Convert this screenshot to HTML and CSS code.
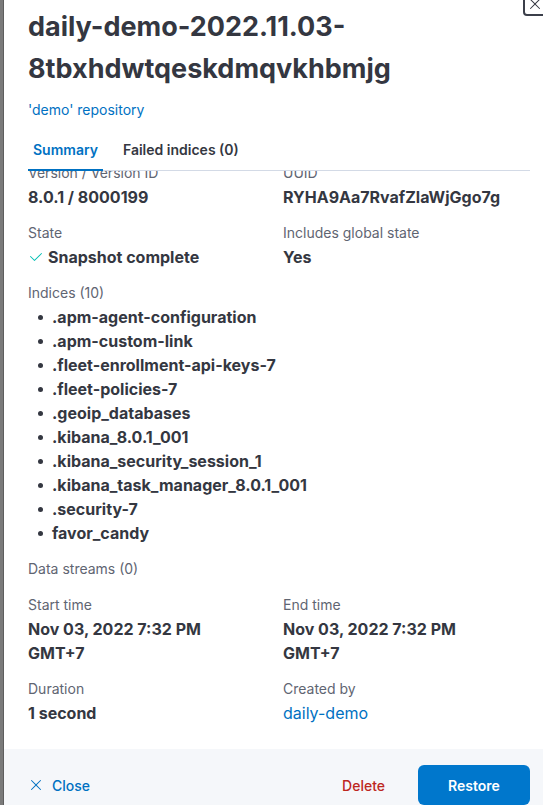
FILE: index.html
```html
<!DOCTYPE html>
<html lang="en">
<head>
<meta charset="utf-8">
<title>Snapshot details</title>
<link rel="stylesheet" href="styles.css">
</head>
<body>
<div class="flyout">
  <button class="flyout-close" aria-label="Close this dialog">
    <svg viewBox="0 0 16 16" width="16" height="16"><path d="M7.293 8 3.146 3.854a.5.5 0 1 1 .708-.708L8 7.293l4.146-4.147a.5.5 0 0 1 .708.708L8.707 8l4.147 4.146a.5.5 0 0 1-.708.708L8 8.707l-4.146 4.147a.5.5 0 0 1-.708-.708L7.293 8Z" fill="currentColor"/></svg>
  </button>
  <header class="flyout-header">
    <h2 class="title">daily-demo-2022.11.03-8tbxhdwtqeskdmqvkhbmjg</h2>
    <a class="repo-link" href="#">'demo' repository</a>
    <nav class="tabs">
      <span class="tab is-active">Summary</span>
      <span class="tab">Failed indices (0)</span>
    </nav>
  </header>
  <div class="flyout-body">
    <div class="body-inner">
      <div class="grid">
        <div class="item">
          <div class="label">Version / Version ID</div>
          <div class="value">8.0.1 / 8000199</div>
        </div>
        <div class="item">
          <div class="label">UUID</div>
          <div class="value">RYHA9Aa7RvafZlaWjGgo7g</div>
        </div>
        <div class="item">
          <div class="label">State</div>
          <div class="value health">
            <svg viewBox="0 0 16 16" width="16" height="16"><path d="M6.5 12a.502.502 0 0 1-.354-.146l-4-4a.502.502 0 0 1 .708-.708L6.5 10.793l6.646-6.647a.502.502 0 0 1 .708.708l-7 7A.502.502 0 0 1 6.5 12" fill="currentColor"/></svg>
            <span>Snapshot complete</span>
          </div>
        </div>
        <div class="item">
          <div class="label">Includes global state</div>
          <div class="value">Yes</div>
        </div>
        <div class="item wide">
          <div class="label">Indices (10)</div>
          <ul class="value list">
            <li>.apm-agent-configuration</li>
            <li>.apm-custom-link</li>
            <li>.fleet-enrollment-api-keys-7</li>
            <li>.fleet-policies-7</li>
            <li>.geoip_databases</li>
            <li>.kibana_8.0.1_001</li>
            <li>.kibana_security_session_1</li>
            <li>.kibana_task_manager_8.0.1_001</li>
            <li>.security-7</li>
            <li>favor_candy</li>
          </ul>
        </div>
        <div class="item wide">
          <div class="label">Data streams (0)</div>
        </div>
        <div class="item">
          <div class="label">Start time</div>
          <div class="value">Nov 03, 2022 7:32 PM GMT+7</div>
        </div>
        <div class="item">
          <div class="label">End time</div>
          <div class="value">Nov 03, 2022 7:32 PM GMT+7</div>
        </div>
        <div class="item">
          <div class="label">Duration</div>
          <div class="value">1 second</div>
        </div>
        <div class="item">
          <div class="label">Created by</div>
          <div class="value"><a class="link" href="#">daily-demo</a></div>
        </div>
      </div>
    </div>
  </div>
  <footer class="flyout-footer">
    <button class="btn-empty close-btn">
      <svg viewBox="0 0 16 16" width="16" height="16"><path d="M7.293 8 3.146 3.854a.5.5 0 1 1 .708-.708L8 7.293l4.146-4.147a.5.5 0 0 1 .708.708L8.707 8l4.147 4.146a.5.5 0 0 1-.708.708L8 8.707l-4.146 4.147a.5.5 0 0 1-.708-.708L7.293 8Z" fill="currentColor"/></svg>
      <span>Close</span>
    </button>
    <div class="actions">
      <button class="btn-empty delete-btn">Delete</button>
      <button class="btn-fill">Restore</button>
    </div>
  </footer>
</div>
</body>
</html>
```
FILE: styles.css
```css
* { box-sizing: border-box; }
html, body { margin: 0; padding: 0; overflow: hidden; }
body {
  background: #7a7a7a;
  font-family: Inter, "Noto Sans", sans-serif;
  color: #343741;
  font-size: 14px;
  line-height: 24px;
}
.flyout {
  position: relative;
  margin-left: 4px;
  height: 821px;
  background: #fff;
  display: flex;
  flex-direction: column;
  box-shadow: -1px 0 0 #5e5e5e;
}
.flyout-close {
  position: absolute;
  top: -8px;
  left: 519px;
  width: 24px;
  height: 24px;
  padding: 0;
  display: flex;
  align-items: center;
  justify-content: center;
  background: #fff;
  color: #343741;
  border: 2px solid #3b3f4a;
  border-radius: 4px;
}
.flyout-header {
  padding: 6px 13px 0 24px;
}
.title {
  margin: 0;
  font-size: 27px;
  line-height: 42px;
  font-weight: 700;
  color: #343741;
}
.repo-link {
  display: block;
  margin-top: 10px;
  line-height: 20px;
  color: #0071c2;
  text-decoration: none;
}
.tabs {
  margin-top: 10px;
  display: flex;
  gap: 15px;
  border-bottom: 1px solid #d3dae6;
}
.tab {
  position: relative;
  height: 40px;
  display: flex;
  align-items: center;
  padding: 0 5px;
  font-weight: 600;
  color: #343741;
}
.tab.is-active { color: #0071c2; }
.tab.is-active::after {
  content: "";
  position: absolute;
  left: 0;
  right: 0;
  bottom: -1px;
  height: 2px;
  background: #0071c2;
}
.flyout-body {
  flex: 1;
  overflow: hidden;
  padding: 0 13px 0 24px;
}
.body-inner { margin-top: -10px; }
.grid {
  display: grid;
  grid-template-columns: 1fr 1fr;
  column-gap: 8px;
  row-gap: 12px;
}
.item.wide { grid-column: 1 / -1; }
.label { color: #5f6572; }
.value {
  font-size: 16px;
  font-weight: 700;
  color: #343741;
  max-width: 225px;
}
.health { display: flex; align-items: center; gap: 4px; }
.health svg { color: #00bfb3; flex: none; }
.list { margin: 0; padding: 0; list-style: none; max-width: none; }
.list li { display: flex; align-items: center; }
.list li::before {
  content: "";
  width: 5px;
  height: 5px;
  border-radius: 50%;
  background: #343741;
  margin: 1px 9px 0 10px;
}
.link { color: #0071c2; text-decoration: none; font-weight: 400; }
.flyout-footer {
  height: 72px;
  flex: none;
  background: #f5f7fa;
  padding: 16px 13px 16px 24px;
  display: flex;
  justify-content: space-between;
  align-items: center;
}
button { font-family: inherit; font-size: 14px; cursor: pointer; }
.btn-empty {
  background: none;
  border: 0;
  height: 40px;
  display: flex;
  align-items: center;
  gap: 8px;
  padding: 0;
}
.close-btn { color: #0071c2; font-weight: 500; }
.actions { display: flex; align-items: center; gap: 25px; }
.delete-btn { color: #bd271e; padding: 0 8px; font-weight: 500; }
.btn-fill {
  width: 112px;
  height: 40px;
  border: 0;
  border-radius: 6px;
  background: #0077cc;
  color: #fff;
  font-weight: 600;
}
```
